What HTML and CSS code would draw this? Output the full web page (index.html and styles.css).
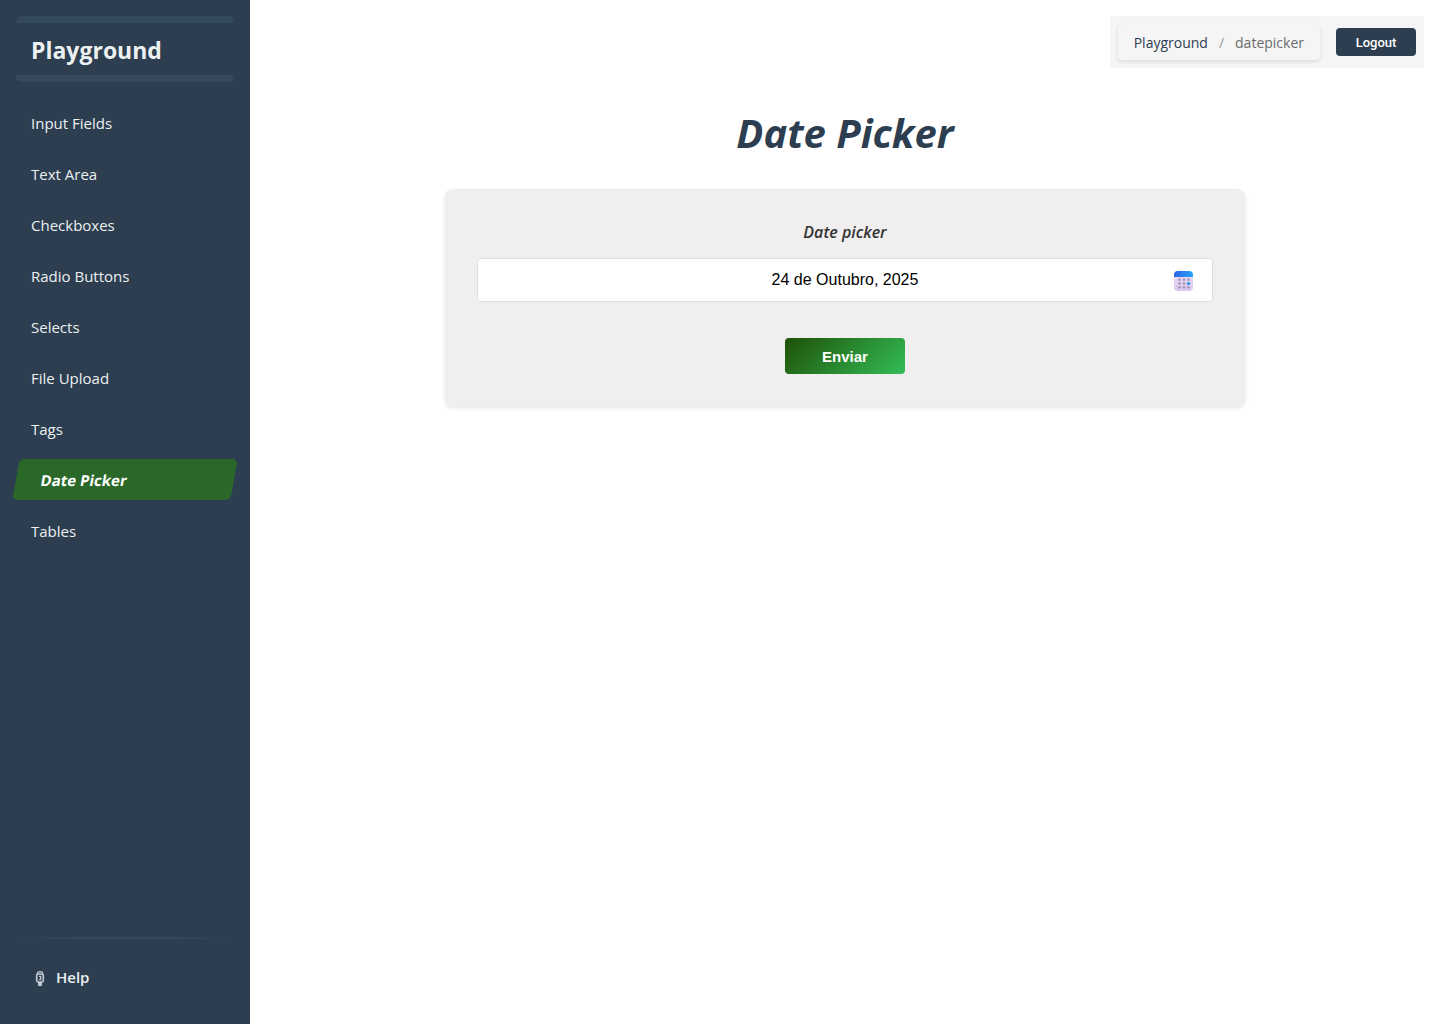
FILE: index.html
```html
<!DOCTYPE html>
<html lang="pt-BR">
<head>
<meta charset="utf-8">
<meta name="viewport" content="width=device-width, initial-scale=1">
<title>Playground</title>
<link rel="stylesheet" href="styles.css">
</head>
<body>
<div class="app">
  <aside class="sidebar">
    <div class="brand">Playground</div>
    <nav class="menu">
      <a class="menu-link" href="#inputs">Input Fields</a>
      <a class="menu-link" href="#textarea">Text Area</a>
      <a class="menu-link" href="#checkboxes">Checkboxes</a>
      <a class="menu-link" href="#radios">Radio Buttons</a>
      <a class="menu-link" href="#selects">Selects</a>
      <a class="menu-link" href="#upload">File Upload</a>
      <a class="menu-link" href="#tags">Tags</a>
      <a class="menu-link active" href="#datepicker" aria-current="page">Date Picker</a>
      <a class="menu-link" href="#tables">Tables</a>
    </nav>
    <div class="sidebar-footer">
      <a class="help" href="#help">
        <svg class="help-icon" width="16" height="16" viewBox="0 0 16 16" aria-hidden="true">
          <path d="M5.500 4V3Q5.500 1.700 8 1.700T10.500 3V4" fill="none" stroke="#c3cad2" stroke-width="1.300"/>
          <rect x="6" y="12" width="4" height="4" rx=".8" fill="#c3cad2"/>
          <rect x="4.700" y="4" width="6.600" height="8" rx="1.500" fill="#2c3e50" stroke="#c3cad2" stroke-width="1.600"/>
          <path d="M7 6.300H8.700V9.700H7" fill="none" stroke="#c3cad2" stroke-width="1.300"/>
        </svg>
        Help
      </a>
    </div>
  </aside>
  <main class="content">
    <header class="topbar">
      <nav class="breadcrumb" aria-label="Breadcrumb">
        <a class="crumb-link" href="#home">Playground</a>
        <span class="crumb-separator">/</span>
        <span class="crumb-current">datepicker</span>
      </nav>
      <button class="logout" type="button">Logout</button>
    </header>
    <h1 class="title">Date Picker</h1>
    <form class="card">
      <label class="label" for="date">Date picker</label>
      <div class="date-field">
        <input class="date-input" id="date" type="text" value="24 de Outubro, 2025">
        <svg class="calendar-icon" width="20" height="22" viewBox="0 -2 20 22" aria-hidden="true">
          <defs>
            <linearGradient id="calendar-page" x1="0" y1="0" x2="0" y2="1"><stop stop-color="#e8e2f4"/><stop offset="1" stop-color="#ddc5ee"/></linearGradient>
            <linearGradient id="calendar-head"><stop stop-color="#2a62e2"/><stop offset="1" stop-color="#28a4fa"/></linearGradient>
          </defs>
          <rect width="19" height="20" rx="4" fill="url(#calendar-page)"/>
          <path d="M0 6V4Q0 0 4 0H15Q19 0 19 4V6Z" fill="url(#calendar-head)"/>
          <g fill="#a596b5">
            <circle cx="5.500" cy="8.700" r="1.350"/><circle cx="10" cy="8.700" r="1.350"/><circle cx="14.500" cy="8.700" r="1.350"/>
            <circle cx="5.500" cy="12.500" r="1.350"/><circle cx="10" cy="12.500" r="1.350"/>
            <circle cx="5.500" cy="16.300" r="1.350"/><circle cx="10" cy="16.300" r="1.350"/><circle cx="14.500" cy="16.300" r="1.350"/>
          </g>
          <circle cx="14.500" cy="12.500" r="1.600" fill="#2492f0"/>
        </svg>
      </div>
      <button class="submit" type="submit">Enviar</button>
    </form>
  </main>
</div>
</body>
</html>
```
FILE: styles.css
```css
* {
  box-sizing: border-box;
}

body {
  margin: 0;
  background: #fff;
  font-family: "Segoe UI", "Open Sans", "Noto Sans", sans-serif;
  font-size: 15px;
}

a {
  color: inherit;
  text-decoration: none;
}

button,
input {
  font-family: "Liberation Sans", Arial, sans-serif;
}

.app {
  display: flex;
  min-height: 100vh;
}

.sidebar {
  display: flex;
  flex: 0 0 250px;
  flex-direction: column;
  padding: 16px;
  background: #2c3e50;
  color: #ecf0f1;
}

.brand {
  margin-bottom: 20px;
  padding: 11px 15px 9px;
  border: solid #34495e;
  border-width: 7px 0;
  border-radius: 5px;
  font-size: 23px;
  font-weight: 700;
  line-height: 32px;
}

.menu {
  display: flex;
  flex-direction: column;
  gap: 10px;
}

.menu-link {
  padding: 11px 15px 9px;
  border-radius: 5px;
  line-height: 21px;
}

.menu-link.active {
  padding-left: 25px;
  background: #296829;
  color: #fff;
  font-weight: 700;
  transform: skewX(-10deg);
}

.sidebar-footer {
  margin-top: auto;
}

.sidebar-footer::before {
  display: block;
  height: 2px;
  background: linear-gradient(90deg, transparent, #34495e 30%, #34495e 70%, transparent);
  content: "";
}

.help {
  display: flex;
  align-items: center;
  gap: 8px;
  padding: 28px 16px 20px;
  font-weight: 600;
  line-height: 21px;
}

.content {
  display: flex;
  flex: 1;
  flex-direction: column;
  align-items: center;
  min-width: 0;
  padding: 16px;
}

.topbar {
  display: flex;
  align-items: center;
  align-self: flex-end;
  gap: 16px;
  padding: 8px;
  border-radius: 4px;
  background: #f5f5f5;
}

.breadcrumb {
  display: flex;
  gap: 11px;
  padding: 9px 16px 7px;
  border-radius: 4px;
  box-shadow: 0 2px 4px rgba(0, 0, 0, 0.1);
  color: #6c6c6c;
  font-size: 14px;
  line-height: 20px;
}

.crumb-link {
  color: #2c3e50;
}

.crumb-separator {
  color: #999;
}

.logout {
  width: 80px;
  height: 28px;
  padding: 0;
  border: 0;
  border-radius: 4px;
  background: #2c3e50;
  color: #fff;
  font-family: Roboto, sans-serif;
  font-size: 13px;
  font-weight: 500;
}

.title {
  margin: 36px 0 28px;
  color: #2c3e50;
  font-size: 40px;
  font-style: italic;
  font-weight: 700;
  line-height: 57px;
}

.card {
  display: flex;
  flex-direction: column;
  align-items: center;
  width: 100%;
  max-width: 800px;
  padding: 32px;
  border-radius: 8px;
  background: #f1eeef;
  box-shadow: 0 2px 4px rgba(0, 0, 0, 0.1);
}

.label {
  margin-bottom: 15px;
  color: #333;
  font-size: 16px;
  font-style: italic;
  font-weight: 600;
  line-height: 22px;
}

.date-field {
  display: flex;
  align-items: center;
  width: 100%;
  height: 44px;
  margin-bottom: 36px;
  padding: 0 18px;
  border: 1px solid #ddd;
  border-radius: 4px;
  background: #fff;
}

.date-input {
  flex: 1;
  min-width: 0;
  padding: 0 0 0 20px;
  border: 0;
  outline: 0;
  background: transparent;
  color: #000;
  font-size: 16px;
  text-align: center;
}

.submit {
  width: 120px;
  height: 36px;
  padding: 0;
  border: 0;
  border-radius: 4px;
  background: linear-gradient(135deg, #1e5006, #34bd58);
  color: #fff;
  font-size: 15px;
  font-weight: 700;
}
```
